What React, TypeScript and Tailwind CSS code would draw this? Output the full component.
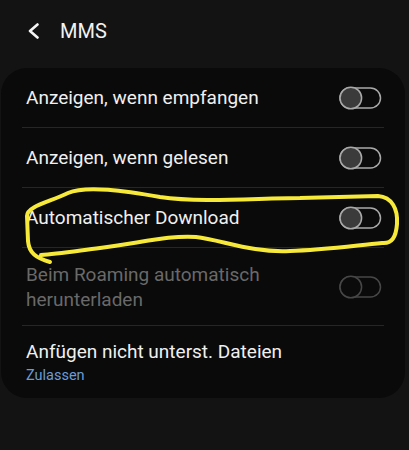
import React from 'react';

interface SettingRow {
    title: string;
    subtitle?: string;
    toggle?: boolean;
    disabled?: boolean;
}

const ROWS: SettingRow[] = [
    { title: 'Anzeigen, wenn empfangen', toggle: true },
    { title: 'Anzeigen, wenn gelesen', toggle: true },
    { title: 'Automatischer Download', toggle: true },
    { title: 'Beim Roaming automatisch herunterladen', toggle: true, disabled: true },
    { title: 'Anfügen nicht unterst. Dateien', subtitle: 'Zulassen' },
];

const Toggle: React.FC<{ disabled?: boolean }> = ({ disabled }) => {
    const stroke = disabled ? '#474747' : '#a9a9a9';
    return (
        <svg width="43" height="24" viewBox="0 0 43 24" className="shrink-0">
            <rect x="1" y="2" width="40.5" height="20" rx="10" fill="none" stroke={stroke} strokeWidth="1.5" />
            <circle cx="11.8" cy="12" r="10.8" fill={disabled ? '#0b0b0b' : '#3b3b3b'} stroke={stroke} strokeWidth="1.5" />
        </svg>
    );
};

const App: React.FC = () => {
    return (
        <div className="relative h-[450px] w-[409px] overflow-hidden bg-[#131313] font-['Roboto','Liberation_Sans',sans-serif]">
            <header className="flex h-[68px] items-center pb-[6px] pl-[27px]">
                <svg width="13" height="16" viewBox="0 0 13 16" className="mr-[20px]">
                    <path d="M10.5 1.5 L3 8 L10.5 14.5" fill="none" stroke="#f5f5f5" strokeWidth="2.6" strokeLinecap="round" strokeLinejoin="round" />
                </svg>
                <span className="text-[20px] leading-none text-[#f2f2f2]">MMS</span>
            </header>

            <div className="ml-px mr-1 rounded-[26px] bg-[#0a0a0a]">
                {ROWS.map((row, i) => {
                    const multi = row.title.length > 32;
                    return (
                        <div key={row.title}>
                            {i > 0 && <div className="mx-[21px] h-px bg-[#262626]" />}
                            <div
                                className={
                                    multi
                                        ? 'flex h-[77px] items-center justify-between pl-[25px] pr-[23px]'
                                        : row.subtitle
                                        ? 'flex h-[72px] items-center justify-between pt-[3px] pl-[25px] pr-[23px]'
                                        : 'flex h-[59px] items-center justify-between pl-[25px] pr-[23px]'
                                }
                            >
                                <div className="flex flex-col">
                                    <span
                                        className={
                                            row.disabled
                                                ? 'w-[260px] text-[19px] leading-[25px] text-[#696969]'
                                                : 'text-[19px] leading-[24px] text-[#f0f0f0]'
                                        }
                                    >
                                        {row.title}
                                    </span>
                                    {row.subtitle && (
                                        <span className="text-[14.5px] leading-[23px] text-[#6c9bd6]">{row.subtitle}</span>
                                    )}
                                </div>
                                {row.toggle && <Toggle disabled={row.disabled} />}
                            </div>
                        </div>
                    );
                })}
            </div>

            <svg className="pointer-events-none absolute left-0 top-0" width="409" height="450" viewBox="0 0 409 450">
                <path
                    d="M50 262 C36 258 29 253 28 241 L27 216 C27 206 50 202 68 193 C86 185 126 191 160 197 C200 203 258 198 300 198 L378 196 C392 197 398 209 397 224 C396 237 392 244 382 243 C351 246 321 250 290 251 C252 253 222 240 196 237 C170 235 140 243 100 248 C76 251 56 254 41 255"
                    fill="none"
                    stroke="#f7e93a"
                    strokeWidth="4"
                    strokeLinecap="round"
                    strokeLinejoin="round"
                />
            </svg>
        </div>
    );
};

export default App;
